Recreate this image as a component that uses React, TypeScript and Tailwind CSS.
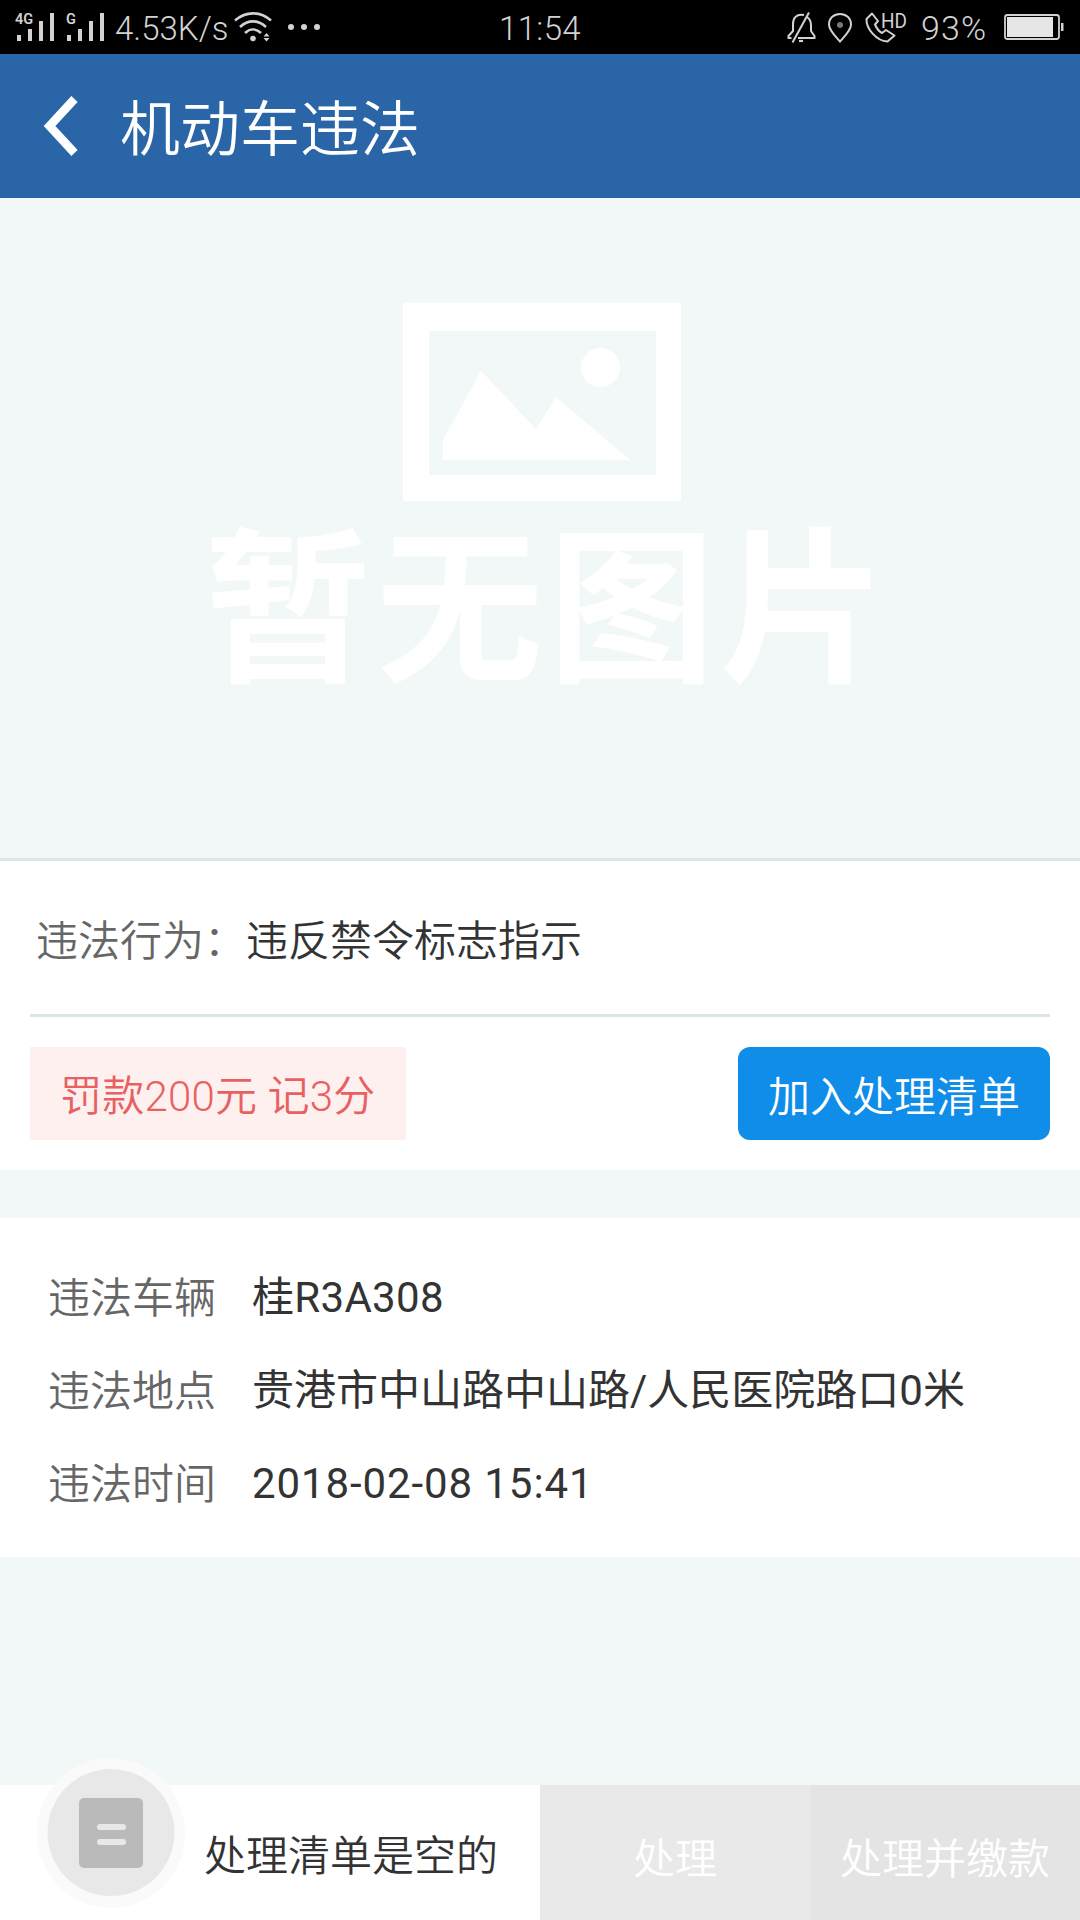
import type { ReactNode } from "react";

const details = [
  { label: "违法车辆", value: <span className="tracking-[0.3px]">桂R3A308</span> },
  { label: "违法地点", value: "贵港市中山路中山路/人民医院路口0米" },
  { label: "违法时间", value: <span className="tracking-[0.9px]">2018-02-08 15:41</span> },
];

function Signal({ network }: { network: string }) {
  return (
    <svg width="40" height="54" viewBox="0 0 40 54" fill="#d2d2d2">
      <text x={network === "G" ? 1 : 0} y="24" fontSize="14.5" fontWeight="600">
        {network}
      </text>
      <rect x="2" y="35" width="4" height="6" />
      <rect x="13" y="29" width="4" height="12" />
      <rect x="24" y="21" width="4" height="20" />
      <rect x="35" y="13" width="4" height="28" />
    </svg>
  );
}

function WifiIcon() {
  return (
    <svg width="38" height="54" viewBox="0 0 38 54" fill="none" stroke="#d2d2d2" strokeWidth="2.6">
      <path d="M1 20.5C12 11 26 11 37 20.5" />
      <path d="M6 27C14 19.5 24 19.5 32 27" />
      <path d="M11 33C16 28.3 22 28.3 27 33" />
      <circle cx="19" cy="38.5" r="2.8" fill="#d2d2d2" stroke="none" />
      <path d="M32.5 33L35.5 36.5H29.5ZM32.5 41.5L35.5 38H29.5Z" fill="#d2d2d2" stroke="none" />
    </svg>
  );
}

function BellOffIcon() {
  return (
    <svg width="30" height="54" viewBox="0 0 30 54" fill="none" stroke="#d2d2d2" strokeWidth="2">
      <path d="M18 15C10 13.5 7 18.5 7 24V31L2.5 36V38H5.5M21 17C24 19 25 22 25 25V31L28.5 36V38H12" />
      <path d="M23 12.5L6.5 42.5" />
      <path d="M13 41H17" strokeWidth="2.2" />
    </svg>
  );
}

function PinIcon() {
  return (
    <svg width="26" height="54" viewBox="0 0 26 54" fill="none" stroke="#d2d2d2" strokeWidth="2">
      <path d="M13 41.5C9 37 2 30.5 2 24.5C2 18 7 14 13 14C19 14 24 18 24 24.5C24 30.5 17 37 13 41.5Z" />
      <circle cx="13" cy="25" r="3" fill="#777777" stroke="none" />
    </svg>
  );
}

function PhoneHdIcon() {
  return (
    <svg width="44" height="54" viewBox="0 0 44 54" fill="none" stroke="#d2d2d2" strokeWidth="2">
      <path d="M7 13.5L1.5 19C1 29 12 41 22.5 41.5L29.5 35.5L21 30L17 33C14 31.5 11.5 28 10 24.5L13 21Z" strokeLinejoin="round" />
      <text x="16" y="28" fontSize="20.5" fontWeight="400" fill="#d2d2d2" stroke="none" textLength="26" lengthAdjust="spacingAndGlyphs">
        HD
      </text>
    </svg>
  );
}

function BatteryIcon() {
  return (
    <svg width="62" height="54" viewBox="0 0 62 54">
      <rect x="2" y="15" width="54" height="24" rx="2.5" fill="none" stroke="#d2d2d2" strokeWidth="1.8" />
      <rect x="4" y="17" width="46" height="20" fill="#e6e6e6" />
      <rect x="58" y="23" width="2.5" height="8" fill="#d2d2d2" />
    </svg>
  );
}

function StatusBar() {
  return (
    <div className="flex h-[54px] bg-black font-[Roboto,'Noto_Sans_CJK_SC',sans-serif] text-[33px] leading-[57px] font-[350] text-[#d2d2d2]">
      <div className="flex w-[460px] pl-[15px]">
        <Signal network="4G" />
        <div className="w-[10px]" />
        <Signal network="G" />
        <span className="ml-[10px] w-[119px] whitespace-nowrap">4.53K/s</span>
        <WifiIcon />
        <div className="ml-[16px] flex items-center gap-[7px]">
          <span className="size-[6px] rounded-full bg-[#d2d2d2]" />
          <span className="size-[6px] rounded-full bg-[#d2d2d2]" />
          <span className="size-[6px] rounded-full bg-[#d2d2d2]" />
        </div>
      </div>
      <div className="w-[160px] text-center tracking-[0.4px]">11:54</div>
      <div className="flex flex-1 justify-end pr-[15px]">
        <BellOffIcon />
        <div className="w-[11px]" />
        <PinIcon />
        <div className="w-[12px]" />
        <PhoneHdIcon />
        <span className="ml-[12px] w-[82px] text-[34px] tracking-[1.2px]">93%</span>
        <BatteryIcon />
      </div>
    </div>
  );
}

function Header() {
  return (
    <header className="flex h-[144px] items-center bg-[#2a66a7] text-white">
      <svg className="ml-[43px]" width="36" height="60" viewBox="0 0 36 60" fill="none" stroke="white" strokeWidth="8.5">
        <path d="M31.5 3L6.5 30L31.5 57" />
      </svg>
      <h1 className="ml-[41px] pb-[3px] text-[60px] leading-none">机动车违法</h1>
    </header>
  );
}

function Placeholder() {
  return (
    <div className="flex h-[663px] flex-col items-center border-b-[3px] border-[#dde6e6] pt-[105px]">
      <svg className="ml-[3px]" width="278" height="198" viewBox="0 0 278 198" fill="white">
        <path d="M0 0H278V198H0ZM26 28V172H253V28Z" fillRule="evenodd" />
        <path d="M40 157V137L78 68L133 126L153 94L227 157Z" />
        <circle cx="197.5" cy="64.5" r="19.5" />
      </svg>
      <p className="mt-[10px] ml-[16px] text-[167px] leading-[170px] font-bold tracking-[5px] text-white">暂无图片</p>
    </div>
  );
}

function DetailRow({ label, children }: { label: string; children: ReactNode }) {
  return (
    <div className="flex h-[93px] items-center">
      <dt className="w-[204px] text-[#666666]">{label}</dt>
      <dd className="pt-[6px] font-[Roboto,'Noto_Sans_CJK_SC',sans-serif] font-normal whitespace-nowrap">{children}</dd>
    </div>
  );
}

export default function App() {
  return (
    <div className="flex h-[1920px] w-[1080px] flex-col overflow-hidden bg-[#f2f8f8] font-['Noto_Sans_CJK_SC',sans-serif] text-[42px] leading-none font-[350] text-[#333333]">
      <StatusBar />
      <Header />
      <Placeholder />

      <section className="h-[309px] bg-white px-[30px]">
        <div className="flex h-[156px] items-center border-b-[3px] border-[#dde6e6] px-[6px]">
          <span className="text-[#666666]">违法行为：</span>
          <span>违反禁令标志指示</span>
        </div>
        <div className="mt-[30px] flex items-center justify-between">
          <span className="flex h-[93px] w-[376px] items-center bg-[#fdf0ef] pt-[6px] pl-[30px] font-[Roboto,'Noto_Sans_CJK_SC',sans-serif] tracking-[0.2px] text-[#e8605f]">
            罚款200元 记3分
          </span>
          <button className="h-[93px] w-[312px] rounded-[12px] bg-[#0f8de8] text-white">
            加入处理清单
          </button>
        </div>
      </section>

      <dl className="mt-[48px] h-[339px] bg-white px-[48px] py-[30px]">
        {details.map((item) => (
          <DetailRow key={item.label} label={item.label}>
            {item.value}
          </DetailRow>
        ))}
      </dl>

      <footer className="mt-auto flex h-[135px]">
        <div className="flex w-[540px] bg-white pl-[37px]">
          <svg className="-mt-[28px] shrink-0" width="148" height="154" viewBox="0 0 148 154">
            <ellipse cx="74" cy="76" rx="74" ry="75" fill="#fafafa" />
            <circle cx="74" cy="75.5" r="63.5" fill="#e8e8e8" />
            <rect x="42" y="41" width="64" height="70" rx="5" fill="#bababa" />
            <rect x="60" y="67" width="29" height="6" rx="3" fill="#e8e8e8" />
            <rect x="60" y="82" width="29" height="6" rx="3" fill="#e8e8e8" />
          </svg>
          <span className="ml-[19px] pt-[47px] whitespace-nowrap">处理清单是空的</span>
        </div>
        <button className="w-[270px] bg-[#e9e9e9] pt-[7px] text-white">处理</button>
        <button className="w-[270px] bg-[#e4e4e4] pt-[7px] text-white">处理并缴款</button>
      </footer>
    </div>
  );
}
